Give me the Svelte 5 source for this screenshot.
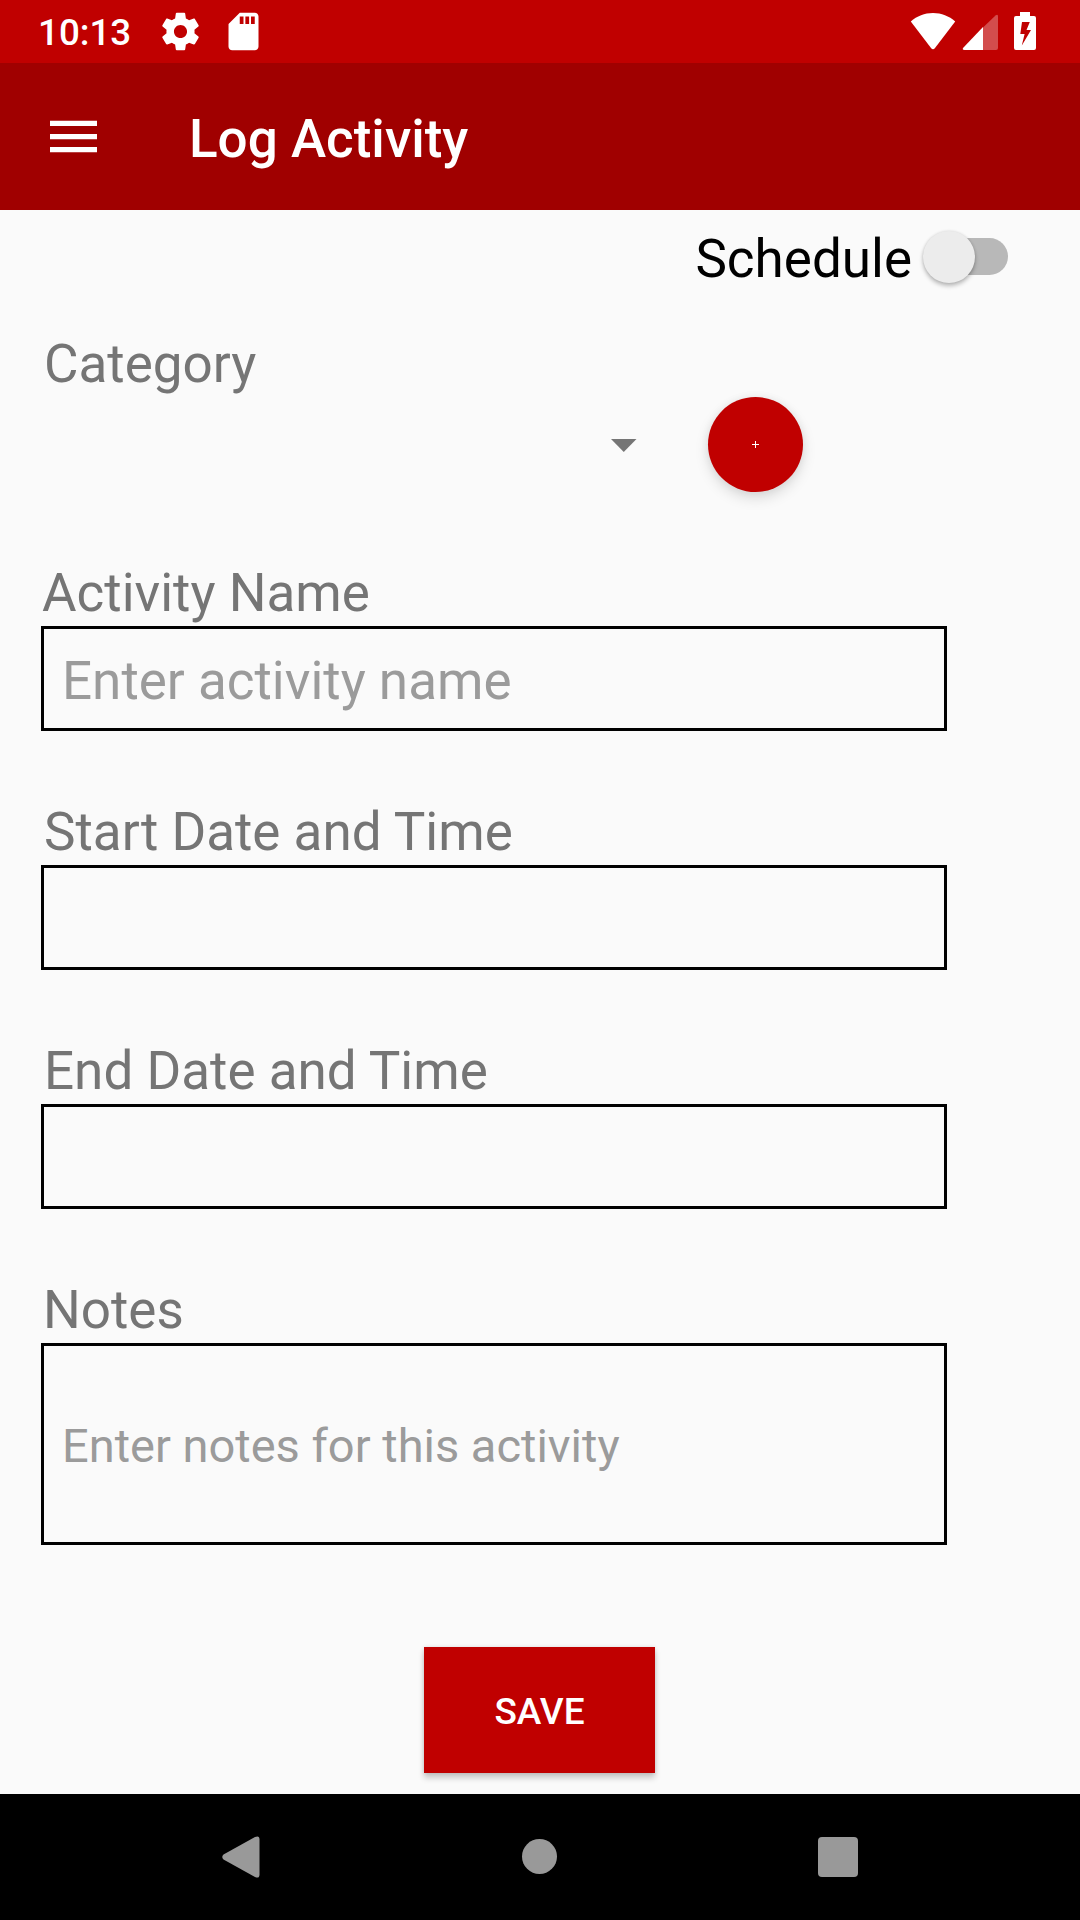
<script>
  let scheduled = $state(false);
  let activityName = $state('');
  let start = $state('');
  let end = $state('');
  let notes = $state('');
</script>

<div class="screen">
  <header class="status">
    <span class="time">10:13</span>
    <svg class="gear" viewBox="0 0 24 24" width="45" height="45"><path d="M19.43 12.98c.04-.32.07-.64.07-.98s-.03-.66-.07-.98l2.11-1.65c.19-.15.24-.42.12-.64l-2-3.46c-.12-.22-.39-.3-.61-.22l-2.49 1c-.52-.4-1.08-.73-1.69-.98l-.38-2.65C14.46 2.18 14.25 2 14 2h-4c-.25 0-.46.18-.49.42l-.38 2.65c-.61.25-1.17.59-1.69.98l-2.49-1c-.23-.09-.49 0-.61.22l-2 3.46c-.13.22-.07.49.12.64l2.11 1.65c-.04.32-.07.65-.07.98s.03.66.07.98l-2.11 1.65c-.19.15-.24.42-.12.64l2 3.46c.12.22.39.3.61.22l2.49-1c.52.4 1.08.73 1.69.98l.38 2.65c.03.24.24.42.49.42h4c.25 0 .46-.18.49-.42l.38-2.65c.61-.25 1.17-.59 1.69-.98l2.49 1c.23.09.49 0 .61-.22l2-3.46c.12-.22.07-.49-.12-.64l-2.11-1.65zM12 15.5c-1.93 0-3.5-1.57-3.5-3.5s1.57-3.5 3.5-3.5 3.5 1.57 3.5 3.5-1.57 3.5-3.5 3.5z" /></svg>
    <svg class="sd" viewBox="0 0 24 24" width="45" height="45"><path d="M18 2h-8L4.02 8 4 20c0 1.1.9 2 2 2h12c1.1 0 2-.9 2-2V4c0-1.1-.9-2-2-2zm-6 6h-2V4h2v4zm3 0h-2V4h2v4zm3 0h-2V4h2v4z" /></svg>
    <svg class="system" viewBox="0 0 130 63" width="130" height="63">
      <path d="M2.8 21.5C9 16 16.500 13 25 13s16 3 22.200 8.500L27 48q-2 2.600-4 0z" transform="translate(-2)" />
      <path opacity=".3" d="M73 27.500L85.500 15.500q2.500-2 2.500.8V48q0 2-2 2H73z" />
      <path d="M73 27v23H54.500q-3-.3-1-2.600z" />
      <path fill-rule="evenodd" d="M110 12h10v4h4q2 0 2 2v30q0 2-2 2h-18q-2 0-2-2V18q0-2 2-2h4zM112 22l-1.700 12h4.300l-2.800 11.500L121 30h-4.500l3.300-8z" />
    </svg>
  </header>

  <nav class="appbar">
    <button class="menu" aria-label="Menu">
      <svg width="47" height="33" viewBox="0 0 47 33"><path d="M0 .7h47V6H0zM0 13.900h47v5.300H0zM0 27h47v5.300H0z" /></svg>
    </button>
    <h1>Log Activity</h1>
  </nav>

  <main>
    <div class="schedule">
      <span>Schedule</span>
      <button class="switch" class:on={scheduled} role="switch" aria-checked={scheduled} aria-label="Schedule" onclick={() => (scheduled = !scheduled)}><i class="thumb"></i></button>
    </div>

    <div class="label category">Category</div>
    <div class="picker">
      <svg width="26" height="15" viewBox="0 0 26 15"><path d="M0 2h25.500L12.750 15z" /></svg>
      <button class="add" aria-label="Add category"><svg width="7" height="7" viewBox="0 0 7 7"><path d="M3 0h1v3h3v1H4v3H3V4H0V3h3z" /></svg></button>
    </div>

    <label class="field"><span class="label name">Activity Name</span><input bind:value={activityName} placeholder="Enter activity name" /></label>
    <label class="field"><span class="label">Start Date and Time</span><input bind:value={start} /></label>
    <label class="field"><span class="label">End Date and Time</span><input bind:value={end} /></label>
    <label class="field"><span class="label notes-label">Notes</span><input class="notes" bind:value={notes} placeholder="Enter notes for this activity" /></label>

    <button class="save">SAVE</button>
  </main>

  <footer>
    <svg width="38" height="42" viewBox="0 0 38 42"><path d="M1.500 18.500L33 1Q37.500-1 37.500 3.500v35Q37.500 43 33 41L1.500 23.500Q-1 21 1.500 18.500z" /></svg>
    <i class="home"></i>
    <i class="recent"></i>
  </footer>
</div>

<style>
  :global(body) { margin: 0; }
  .screen {
    width: 1080px;
    height: 1920px;
    display: flex;
    flex-direction: column;
    overflow: hidden;
    background: #fafafa;
    font-family: Roboto, sans-serif;
    font-size: 53px;
    line-height: 62px;
  }
  .screen :is(button, input) {
    box-sizing: border-box;
    border: 0;
    margin: 0;
    padding: 0;
    font-family: inherit;
    outline: none;
  }
  .status {
    height: 63px;
    box-sizing: border-box;
    padding-left: 38px;
    display: flex;
    align-items: center;
    background: #c00000;
    color: #fff;
    fill: #fff;
  }
  .time { width: 120px; font-size: 36.75px; font-weight: 500; line-height: 44px; padding-top: 3px; }
  .sd { margin-left: 18px; }
  .system { margin-left: 644px; }
  .appbar {
    height: 147px;
    box-sizing: border-box;
    padding-left: 50px;
    display: flex;
    align-items: center;
    background: #a00000;
  }
  .menu { width: 47px; display: grid; background: none; fill: #fff; }
  h1 { margin: 5px 0 0 92px; color: #fff; font-size: 53px; font-weight: 500; line-height: 62px; }
  main { height: 1584px; display: flex; flex-direction: column; }
  .schedule { display: flex; justify-content: flex-end; padding: 18px 72px 0 0; color: #000; height: 62px; }
  .schedule .switch {
    width: 84px;
    height: 37px;
    margin: 10px 0 0 12px;
    border-radius: 19px;
    background: #b8b8b8;
    position: relative;
  }
  .thumb {
    position: absolute;
    left: -1.5px;
    top: -7.5px;
    width: 52px;
    height: 52px;
    border-radius: 50%;
    background: #ececec;
    box-shadow: 0 3px 4px rgba(0, 0, 0, .25), 0 0 3px rgba(0, 0, 0, .12);
  }
  .on .thumb { left: 34px; }
  .label { display: block; height: 62px; color: #757575; padding-left: 3px; }
  .label.name { padding-left: 1px; }
  .label.notes-label { padding-left: 2px; }
  .category { margin: 43px 0 0 41px; }
  .picker { display: flex; align-items: center; height: 95px; margin: 2px 0 0 611px; fill: #757575; }
  .picker .add {
    width: 95px;
    height: 95px;
    margin-left: 71px;
    border-radius: 50%;
    display: grid;
    place-items: center;
    background: #c00000;
    fill: #fff;
    box-shadow: 0 6px 14px rgba(0, 0, 0, .13), 0 0 8px rgba(0, 0, 0, .06);
  }
  .field { display: block; margin: 70px 0 0 41px; }
  .field input {
    display: block;
    width: 906px;
    height: 105px;
    margin-top: 2px;
    padding: 5px 18px 0;
    border: 3px solid #000;
    background: transparent;
    color: #000;
    font-size: 53px;
  }
  .field .notes { height: 202px; font-size: 47px; padding-top: 3px; }
  input::placeholder { color: #9b9b9b; opacity: 1; }
  .save {
    width: 231px;
    height: 126px;
    flex: none;
  }
  main .save {
    margin: 102px 0 0 424px;
    padding-top: 2px;
    background: #c00000;
    color: #fff;
    font-size: 37px;
    font-weight: 500;
    box-shadow: 0 5px 6px rgba(0, 0, 0, .2), 0 0 4px rgba(0, 0, 0, .12);
  }
  footer {
    height: 126px;
    box-sizing: border-box;
    padding: 0 222px 1px;
    display: flex;
    align-items: center;
    justify-content: space-between;
    background: #000;
    fill: #999;
  }
  .home { width: 35px; height: 35px; border-radius: 50%; background: #999; }
  .recent { width: 40px; height: 40px; border-radius: 4px; background: #999; }
</style>
